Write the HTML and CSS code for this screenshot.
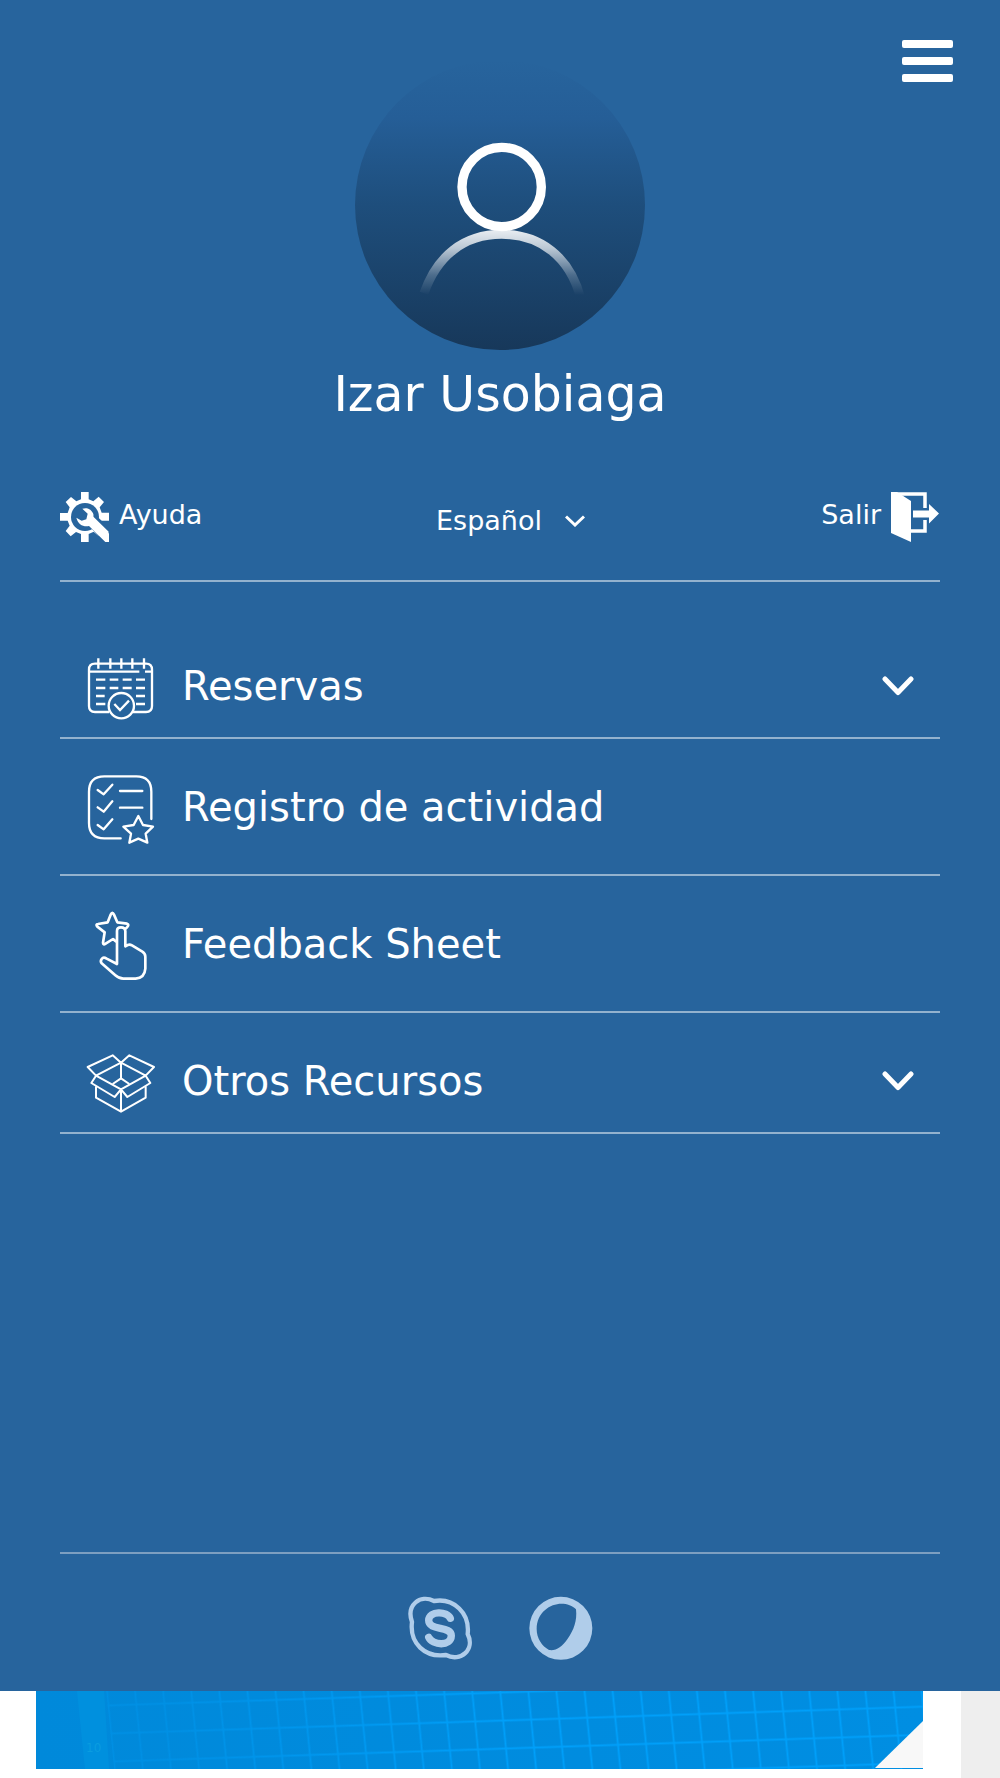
FILE: index.html
```html
<!DOCTYPE html>
<html lang="es">
<head>
<meta charset="utf-8">
<meta name="viewport" content="width=device-width, initial-scale=1">
<title>Menú</title>
<link rel="stylesheet" href="styles.css">
</head>
<body>
<div class="panel">
  <header class="profile">
    <svg class="avatar" viewBox="105 60 870 870" aria-hidden="true">
      <defs>
        <linearGradient id="disc" x1="0" y1="0" x2="0" y2="1">
          <stop offset="0" stop-color="#27649d"/>
          <stop offset=".2" stop-color="#255e97"/>
          <stop offset=".5" stop-color="#1e4e7c"/>
          <stop offset="1" stop-color="#17385a"/>
        </linearGradient>
        <linearGradient id="fade" gradientUnits="userSpaceOnUse" x1="0" y1="565" x2="0" y2="765">
          <stop offset="0" stop-color="#fff" stop-opacity=".92"/>
          <stop offset=".3" stop-color="#fff" stop-opacity=".7"/>
          <stop offset=".7" stop-color="#fff" stop-opacity=".22"/>
          <stop offset="1" stop-color="#fff" stop-opacity="0"/>
        </linearGradient>
      </defs>
      <circle cx="540" cy="495" r="435" fill="url(#disc)"/>
      <path d="M312 760C350 650 430 583 545 583S750 650 782 775" fill="none" stroke="url(#fade)" stroke-width="27"/>
      <circle cx="545" cy="441" r="119" fill="none" stroke="#fff" stroke-width="28"/>
    </svg>
    <button class="burger" type="button" aria-label="Menú">
      <span class="bar"></span><span class="bar"></span><span class="bar"></span>
    </button>
  </header>
  <h1 class="name">Izar Usobiaga</h1>

  <div class="tools">
    <a class="tool" href="#ayuda">
      <svg class="tool-icon" viewBox="30 36 147 150" aria-hidden="true">
        <g fill="#fff">
          <path d="M93 36h23v22l14 6 16-14 16 16-13 16 6 16h22v24h-24l-6 14 15 16-16 16-15-13-15 7v24H93v-24l-15-6-16 13-15-16 12-16-6-15H30V99h23l6-17-12-16 16-15 16 13 14-6z"/>
          <circle cx="105" cy="111" r="42" fill="#27649d"/>
          <path d="M108 122L128 102 180 153V186H170z" stroke="#27649d" stroke-width="9"/>
          <path d="M97 86c15-5 28 2 33 16 1 6 0 10-1 14l48 45v25h-11l-49-48c-17 3-33-4-38-25l16 9 14-4 4-17z"/>
        </g>
      </svg>
      <span>Ayuda</span>
    </a>
    <div class="language">
      <select class="language-select" aria-label="Idioma">
        <option selected>Español</option>
        <option>English</option>
        <option>Euskara</option>
      </select>
      <svg class="language-arrow" viewBox="0 0 20 12" aria-hidden="true"><path d="M1 1.500L10 10 19 1.500" fill="none" stroke="#fff" stroke-width="3"/></svg>
    </div>
    <a class="tool tool-end" href="#salir">
      <span>Salir</span>
      <svg class="tool-icon" viewBox="0 0 49 50" aria-hidden="true">
        <path d="M4 2H34V16M34 28V39H19" fill="none" stroke="#fff" stroke-width="3.500"/>
        <path d="M0 0H6L20 9V50L0 41Z" fill="#fff"/>
        <path d="M22 18.500H38V12L48 21.500 38 31.500V25.500H22Z" fill="#fff"/>
      </svg>
    </a>
  </div>

  <nav class="menu">
    <button class="item item-expand" type="button">
      <svg class="item-icon" viewBox="78 33 216 216" aria-hidden="true">
        <g fill="none" stroke="#fff" stroke-width="7">
          <path d="M147 219H105Q87 219 87 201V92Q87 74 105 74H258Q276 74 276 92V201Q276 219 258 219H219M87 98H238M255 98H276"/>
          <path d="M115 58V89M151 58V89M184 58V89M217 58V89M252 58V89"/>
          <path d="M108 122H136M149 122H175M188 122H215M228 122H255M108 147H136M149 147H175M188 147H215M228 147H255M108 171H134M228 171H255M108 195H136M228 195H255"/>
          <circle cx="184" cy="200" r="38"/>
          <path d="M163 195L180 213 207 185"/>
        </g>
      </svg>
      <span class="label">Reservas</span>
      <svg class="chevron" viewBox="0 0 32 22" aria-hidden="true"><path d="M3 4L16 17.500 29 4"/></svg>
    </button>
    <a class="item" href="#registro">
      <svg class="item-icon" viewBox="78 66 216 216" aria-hidden="true">
        <g fill="none" stroke="#fff" stroke-width="7" stroke-linecap="round" stroke-linejoin="round">
          <path d="M182 268H133Q87 268 87 222V128Q87 82 133 82H229Q274 82 274 128V210"/>
          <path d="M113 123L131 136 157 107M113 175L131 188 157 157M113 228L131 241 157 211M180 126H247M180 176H247"/>
          <path d="M235 201L249 228 279 233 257 254 262 281 235 269 208 281 213 254 190 233 221 228Z"/>
        </g>
      </svg>
      <span class="label">Registro de actividad</span>
    </a>
    <a class="item" href="#feedback">
      <svg class="item-icon" viewBox="78 60 216 216" aria-hidden="true">
        <g fill="none" stroke="#fff" stroke-width="8" stroke-linecap="round" stroke-linejoin="round">
          <path d="M167 160L159 153 137 167Q129 172 129 164L134 133 112 116Q106 109 114 108L143 103 152 80Q157 69 162 80L172 103 201 107Q209 110 201 118L197 122"/>
          <path d="M171 228V129Q171 118 183 118T196 129V175L203 171Q209 168 216 172L247 191Q256 197 256 206V242Q254 270 227 272H190Q177 272 166 262L125 226Q120 220 125 213T140 212Z"/>
        </g>
      </svg>
      <span class="label">Feedback Sheet</span>
    </a>
    <button class="item item-expand" type="button">
      <svg class="item-icon" viewBox="78 51 216 216" aria-hidden="true">
        <g fill="none" stroke="#fff" stroke-width="6" stroke-linejoin="round">
          <path d="M183 104L158 82 83 117 108 143ZM183 104L208 82 282 117 257 143ZM108 143L94 165 164 207 183 184ZM257 143L271 165 202 207 183 184Z"/>
          <path d="M108 175V209L183 251 257 209V175M183 184V251M183 104V151M158 168L183 151 208 168"/>
        </g>
      </svg>
      <span class="label">Otros Recursos</span>
      <svg class="chevron" viewBox="0 0 32 22" aria-hidden="true"><path d="M3 4L16 17.500 29 4"/></svg>
    </button>
  </nav>

  <footer class="social">
    <a href="#skype" aria-label="Skype">
      <svg class="social-icon" viewBox="54 168 192 192" aria-hidden="true">
        <g fill="none" stroke="#b0cdea" stroke-linecap="round">
          <path d="M132 183C90 162 48 195 66 246C58 310 105 354 168 345C212 368 256 328 233 282C240 220 192 173 132 183Z" stroke-width="13" stroke-linejoin="round"/>
          <path d="M181 235C172 212 117 212 116 241C116 274 184 256 184 287C183 321 127 316 116 292" stroke-width="22"/>
        </g>
      </svg>
    </a>
    <a href="#perfil" aria-label="Perfil">
      <svg class="social-icon" viewBox="416 168 192 192" aria-hidden="true">
        <path fill="#b0cdea" fill-rule="evenodd" d="M417 265A94.500 94.500 0 1 1 606 265A94.500 94.500 0 1 1 417 265ZM439 267C439 217 480 191 513 191C530 191 547 197 557 208C561 242 550 271 532 296C514 321 498 333 476 330C455 318 439 296 439 267Z"/>
      </svg>
    </a>
  </footer>
</div>

<main class="page">
  <div class="page-body">
    <svg class="banner" viewBox="0 0 887 78" preserveAspectRatio="xMaxYMin slice" aria-hidden="true">
      <defs>
        <linearGradient id="water"><stop offset="0" stop-color="#0089da"/><stop offset="1" stop-color="#008ee2"/></linearGradient>
        <linearGradient id="reveal"><stop offset=".07" stop-color="#fff" stop-opacity=".3"/><stop offset=".5" stop-color="#fff"/></linearGradient>
        <mask id="tiles-mask"><path d="M70 0H887V78H78Z" fill="url(#reveal)"/></mask>
        <pattern id="tiles" width="28" height="28" patternUnits="userSpaceOnUse" patternTransform="matrix(1 -.033 .1 1 85 0)">
          <path d="M14 0V28M0 14H28" fill="none" stroke="#00a0fa" stroke-width="1.800"/>
        </pattern>
      </defs>
      <rect width="887" height="78" fill="url(#water)"/>
      <path d="M41 0H68L73 78H49Z" fill="#0090de"/>
      <text x="50" y="61" class="depth">10</text>
      <rect width="887" height="78" fill="url(#tiles)" mask="url(#tiles-mask)"/>
      <path d="M887 30V77H839Z" fill="#f8f8f8"/>
    </svg>
  </div>
  <div class="page-edge"></div>
</main>
</body>
</html>
```
FILE: styles.css
```css
* {
  box-sizing: border-box;
}

body {
  margin: 0;
  min-height: 100vh;
  display: flex;
  flex-direction: column;
  background: #fff;
  color: #fff;
  font-family: Verdana, "DejaVu Sans", sans-serif;
}

a {
  color: inherit;
  text-decoration: none;
}

button,
select {
  margin: 0;
  padding: 0;
  border: 0;
  background: none;
  color: inherit;
  font: inherit;
}

svg {
  display: block;
  flex: none;
}

.panel {
  flex: 1;
  display: flex;
  flex-direction: column;
  padding: 40px 60px 0;
  background: #27649d;
}

.profile {
  display: grid;
  grid-template-columns: 1fr auto 1fr;
  align-items: start;
  margin-right: -13px;
  margin-left: -13px;
}

.avatar {
  grid-column: 2;
  width: 290px;
  height: 290px;
  margin-top: 20px;
}

.burger {
  justify-self: end;
  display: grid;
  gap: 9px;
  width: 51px;
}

.bar {
  height: 8px;
  border-radius: 2px;
  background: #fff;
}

.name {
  margin: 15px 0 0;
  font-size: 49px;
  font-weight: 400;
  line-height: 60px;
  text-align: center;
}

.tools {
  display: grid;
  grid-template-columns: 1fr auto 1fr;
  align-items: center;
  padding: 67px 0 38px;
  border-bottom: 2px solid #93b2ce;
  font-size: 27px;
  line-height: 32px;
}

.tool {
  display: flex;
  align-items: center;
  gap: 10px;
}

.tool span {
  padding-bottom: 4px;
}

.tool-end {
  justify-content: flex-end;
}

.tool-icon {
  width: 49px;
  height: 50px;
}

.language {
  display: grid;
  grid-template-columns: 1fr auto;
  align-items: center;
  width: 152px;
  margin-top: 8px;
  margin-left: 24px;
}

.language-select {
  grid-area: 1 / 1 / 2 / 3;
  width: 100%;
  height: 40px;
  appearance: none;
}

.language-select option {
  color: #222;
}

.language-arrow {
  grid-area: 1 / 2;
  width: 20px;
  height: 12px;
  margin-right: 3px;
  pointer-events: none;
}

.menu {
  flex: 1;
  padding-top: 36px;
}

.item {
  display: flex;
  align-items: center;
  gap: 24px;
  width: 100%;
  padding: 32px 26px 31px;
  border-bottom: 2px solid #93b2ce;
  font-size: 40px;
  line-height: 48px;
  text-align: left;
}

.item-expand {
  padding-bottom: 15px;
}

.item-icon {
  width: 72px;
  height: 72px;
  overflow: visible;
}

.label {
  flex: 1;
}

.chevron {
  width: 32px;
  height: 22px;
  fill: none;
  stroke: #fff;
  stroke-width: 5;
  stroke-linecap: round;
  stroke-linejoin: round;
}

.social {
  display: flex;
  justify-content: center;
  gap: 57px;
  padding: 42px 0 31px;
  border-top: 2px solid #7d9fc1;
}

.social-icon {
  width: 64px;
  height: 64px;
}

.page {
  display: flex;
}

.page-body {
  flex: 1;
  padding: 0 38px 9px 36px;
}

.page-edge {
  width: 39px;
  background: #eee;
}

.banner {
  width: 100%;
  height: 78px;
}

.depth {
  fill: #0a9ce0;
  font-size: 12px;
}
```
